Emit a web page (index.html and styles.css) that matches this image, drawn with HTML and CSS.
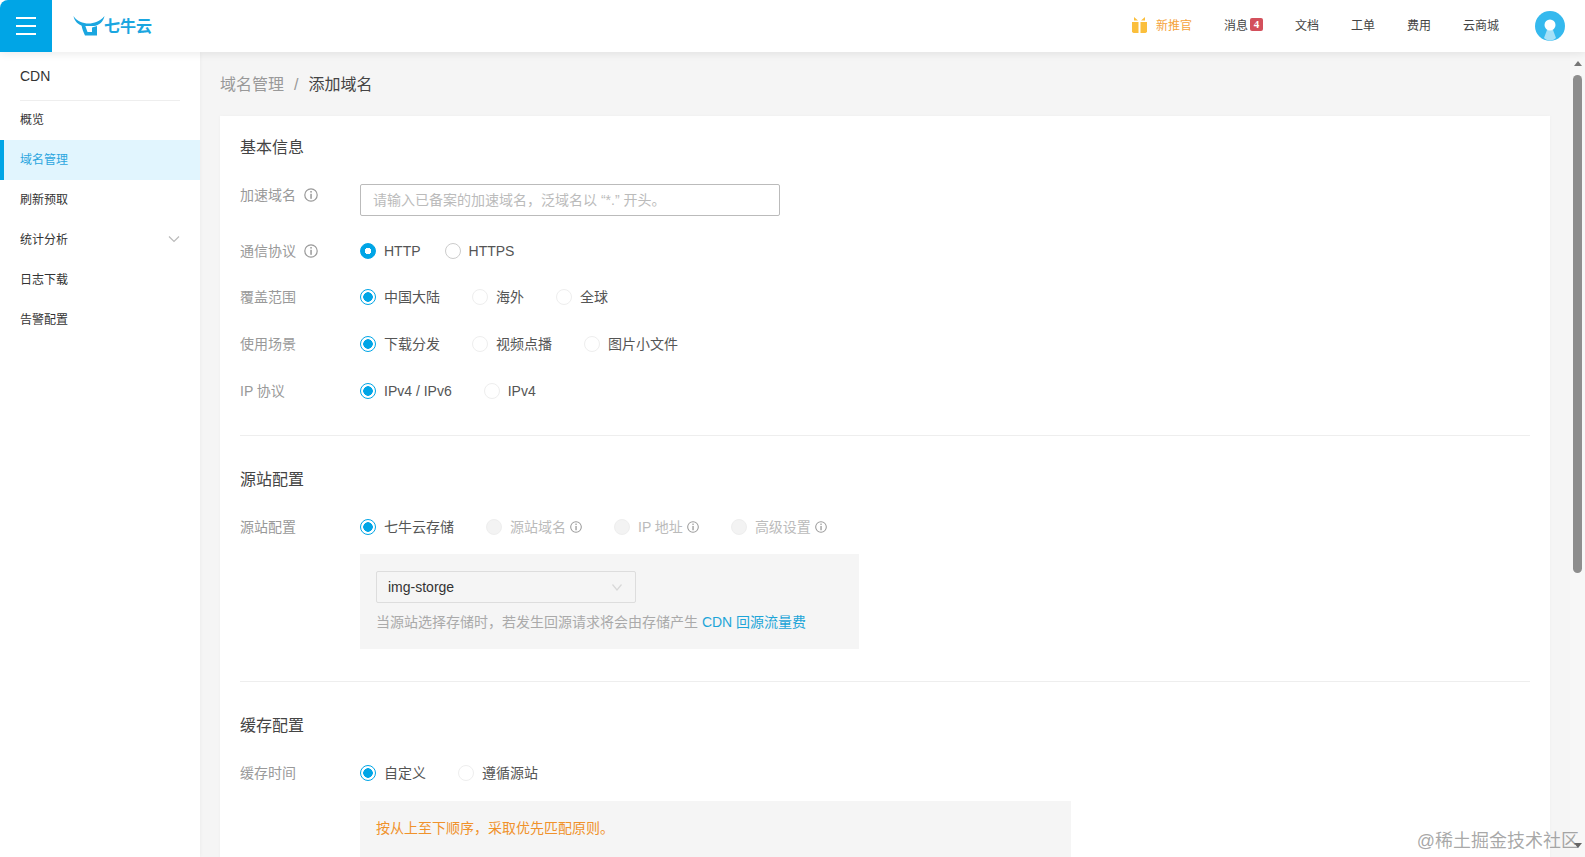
FILE: index.html
```html
<!DOCTYPE html>
<html lang="zh-CN">
<head>
    <meta charset="UTF-8">
    <title>添加域名</title>
    <link rel="stylesheet" href="styles.css">
</head>
<body>

    <header class="topbar">
        <button class="burger"><span></span><span></span><span></span></button>
        <div class="logo">
            <svg width="32" height="22" viewBox="0 0 32 22">
                <path fill="#1aa6e0" d="M0.500 0C4 5.500 10 7.500 15.500 7.500C21 7.500 27 5.500 31.500 0C30.500 5.500 26 9.500 21 10L10 10C5.500 9 1.500 5.500 0.500 0Z"/>
                <path fill="#1aa6e0" d="M8.500 9L12 9L14.500 16L19 16L19 11.500L24 10L24 19.500L12 19.500C10.500 16 9 13 8.500 9Z"/>
                <path fill="#fff" d="M14 11.500L19 11.500L19 13.500L14.800 13.500Z"/>
            </svg>
            <span class="logo-text">七牛云</span>
        </div>
        <nav class="topnav">
            <a class="promo">
                <svg width="15" height="16" viewBox="0 0 15 16">
                    <path fill="#fbbf3c" d="M0 5H6.500V16H1.500L0 15ZM8.500 5H15V15L13.500 16H8.500Z"/>
                    <path fill="#fbbf3c" d="M2 0L6 3.500H2ZM13 0L9 3.500H13Z"/>
                </svg>
                <span>新推官</span>
            </a>
            <a class="msg">消息<span class="badge">4</span></a>
            <a>文档</a>
            <a>工单</a>
            <a>费用</a>
            <a>云商城</a>
            <svg class="avatar" width="30" height="30" viewBox="0 0 30 30">
                <circle cx="15" cy="15" r="15" fill="#35b9ee"/>
                <path fill="#a6e1f8" d="M9 27L12 19H18L21 27C17 30.500 13 30.500 9 27Z"/>
                <circle cx="15" cy="14" r="5.500" fill="#fff"/>
            </svg>
        </nav>
    </header>

    <div class="layout">
        <aside class="sidebar">
            <div class="side-title">CDN</div>
            <ul class="side-menu">
                <li>概览</li>
                <li class="active">域名管理</li>
                <li>刷新预取</li>
                <li>统计分析
                    <svg class="chevron" width="12" height="8" viewBox="0 0 12 8"><path d="M1 1.500L6 6.500L11 1.500" fill="none" stroke="#bbb" stroke-width="1.200"/></svg>
                </li>
                <li>日志下载</li>
                <li>告警配置</li>
            </ul>
        </aside>

        <main class="content">
            <div class="breadcrumb">
                <span class="crumb-link">域名管理</span>
                <span class="crumb-sep">/</span>
                <span class="crumb-now">添加域名</span>
            </div>

            <section class="card">
                <h2>基本信息</h2>
                <div class="row first-row">
                    <label>加速域名
                        <svg class="info" width="14" height="14" viewBox="0 0 14 14"><use href="#info"/></svg>
                    </label>
                    <input class="text-input" placeholder="请输入已备案的加速域名，泛域名以 “*.” 开头。">
                </div>
                <div class="row">
                    <label>通信协议
                        <svg class="info" width="14" height="14" viewBox="0 0 14 14"><use href="#info"/></svg>
                    </label>
                    <div class="radios tight">
                        <span class="radio"><i class="dot focus"></i>HTTP</span>
                        <span class="radio"><i class="dot plain"></i>HTTPS</span>
                    </div>
                </div>
                <div class="row">
                    <label>覆盖范围</label>
                    <div class="radios cn">
                        <span class="radio"><i class="dot on"></i>中国大陆</span>
                        <span class="radio"><i class="dot"></i>海外</span>
                        <span class="radio"><i class="dot"></i>全球</span>
                    </div>
                </div>
                <div class="row">
                    <label>使用场景</label>
                    <div class="radios cn">
                        <span class="radio"><i class="dot on"></i>下载分发</span>
                        <span class="radio"><i class="dot"></i>视频点播</span>
                        <span class="radio"><i class="dot"></i>图片小文件</span>
                    </div>
                </div>
                <div class="row">
                    <label>IP 协议</label>
                    <div class="radios">
                        <span class="radio"><i class="dot on"></i>IPv4 / IPv6</span>
                        <span class="radio"><i class="dot"></i>IPv4</span>
                    </div>
                </div>

                <hr>

                <h2>源站配置</h2>
                <div class="row first-row-text">
                    <label>源站配置</label>
                    <div class="radios cn">
                        <span class="radio"><i class="dot on"></i>七牛云存储</span>
                        <span class="radio off"><i class="dot disabled"></i>源站域名<svg class="info-sm" width="12" height="12" viewBox="0 0 14 14"><use href="#info"/></svg></span>
                        <span class="radio off"><i class="dot disabled"></i>IP 地址<svg class="info-sm" width="12" height="12" viewBox="0 0 14 14"><use href="#info"/></svg></span>
                        <span class="radio off"><i class="dot disabled"></i>高级设置<svg class="info-sm" width="12" height="12" viewBox="0 0 14 14"><use href="#info"/></svg></span>
                    </div>
                </div>
                <div class="sub-box bucket-box">
                    <div class="select">
                        <span>img-storge</span>
                        <svg width="10" height="7" viewBox="0 0 10 7"><path d="M0.500 0.500L5 6L9.500 0.500" fill="none" stroke="#d8d8d8" stroke-width="1.200"/></svg>
                    </div>
                    <p class="hint">当源站选择存储时，若发生回源请求将会由存储产生 <a>CDN 回源流量费</a></p>
                </div>

                <hr>

                <h2>缓存配置</h2>
                <div class="row first-row-text">
                    <label>缓存时间</label>
                    <div class="radios cn">
                        <span class="radio"><i class="dot on"></i>自定义</span>
                        <span class="radio"><i class="dot"></i>遵循源站</span>
                    </div>
                </div>
                <div class="sub-box cache-box">
                    <p class="warn">按从上至下顺序，采取优先匹配原则。</p>
                </div>
            </section>
        </main>

        <div class="scrollbar">
            <i class="arrow-up"></i>
            <div class="thumb"></div>
        </div>
    </div>

    <div class="watermark">@稀土掘金技术社区</div>
    <i class="arrow-down"></i>

    <svg class="defs" width="0" height="0">
        <symbol id="info" viewBox="0 0 14 14">
            <circle cx="7" cy="7" r="6.200" fill="none" stroke="#999" stroke-width="1.200"/>
            <rect x="6.300" y="3" width="1.500" height="1.600" fill="#999"/>
            <rect x="6.300" y="5.800" width="1.500" height="5" fill="#999"/>
        </symbol>
    </svg>

</body>
</html>
```

FILE: styles.css
```css
* {
    box-sizing: border-box;
}
html, body {
    height: 100%;
}
body {
    margin: 0;
    overflow: hidden;
    background-color: #f5f5f5;
    color: #333;
    font-family: "Liberation Sans", "Noto Sans CJK SC", sans-serif;
    font-size: 14px;
    position: relative;
}

/* top bar */
.topbar {
    display: flex;
    align-items: center;
    height: 52px;
    background-color: white;
    box-shadow: 0 2px 8px rgba(0, 0, 0, 0.08);
    position: relative;
    z-index: 2;
}
.burger {
    display: flex;
    flex-direction: column;
    justify-content: center;
    align-items: center;
    gap: 6px;
    width: 52px;
    height: 52px;
    border: none;
    padding: 0;
    border-top-left-radius: 8px;
    background-color: #00a5e6;
}
.burger span {
    display: block;
    width: 20px;
    height: 2px;
    background-color: white;
}
.logo {
    display: flex;
    align-items: center;
    margin-left: 21px;
    padding-top: 2px;
}
.logo-text {
    margin-left: -1px;
    font-size: 16px;
    font-weight: bold;
    line-height: 22px;
    color: #1aa6e0;
}
.topnav {
    display: flex;
    align-items: center;
    gap: 32px;
    margin-left: auto;
    padding-right: 20px;
    font-size: 12px;
    color: #444;
}
.topnav a {
    padding-bottom: 3px;
}
.promo {
    display: flex;
    align-items: center;
    gap: 9px;
    color: #f5a33c;
}
.msg {
    display: flex;
    align-items: center;
    gap: 2px;
}
.badge {
    width: 13px;
    height: 13px;
    border-radius: 2px;
    background-color: #d3505c;
    color: white;
    font-family: "Liberation Serif", serif;
    font-size: 11px;
    font-weight: bold;
    line-height: 13px;
    text-align: center;
}
.avatar {
    margin-left: 4px;
}

/* page layout */
.layout {
    display: flex;
    height: calc(100% - 52px);
}
.sidebar {
    flex: none;
    width: 200px;
    background-color: white;
    box-shadow: 1px 0 3px rgba(0, 0, 0, 0.03);
}
.side-title {
    height: 48px;
    margin: 0 20px;
    box-shadow: 0 1px 0 #eee;
    line-height: 48px;
    font-size: 14px;
}
.side-menu {
    list-style: none;
    margin: 0;
    padding: 0;
    font-size: 12px;
}
.side-menu li {
    display: flex;
    align-items: center;
    justify-content: space-between;
    height: 40px;
    padding: 0 20px 3px 20px;
}
.side-menu .active {
    background-color: #e1f5fe;
    border-left: 4px solid #00a5e6;
    padding-left: 16px;
    color: #2ba6df;
}

/* content */
.content {
    flex: 1;
    min-width: 0;
    padding: 0 20px;
    overflow: hidden;
}
.breadcrumb {
    height: 64px;
    padding-top: 22px;
    font-size: 16px;
    line-height: 22px;
}
.crumb-link {
    color: #999;
}
.crumb-sep {
    margin: 0 5.500px;
    color: #999;
}
.crumb-now {
    color: #444;
}
.card {
    padding: 20px 20px 40px;
    background-color: white;
    box-shadow: 0 0 4px rgba(0, 0, 0, 0.03);
}
.card h2 {
    margin: 0;
    font-size: 16px;
    font-weight: normal;
    line-height: 24px;
    color: #444;
}
.card hr {
    margin: 34px 0 32px;
    border: none;
    border-top: 1px solid #eee;
}
.row {
    display: flex;
    align-items: center;
    height: 20px;
    margin-top: 27px;
}
.row label {
    flex: none;
    display: flex;
    align-items: center;
    gap: 8px;
    width: 120px;
    padding-bottom: 2px;
    color: #999;
}
.info {
    margin-top: 2px;
}
.first-row {
    align-items: flex-start;
    height: 32px;
    margin-top: 24px;
}
.first-row + .row {
    margin-top: 25px;
}
.first-row + .row + .row {
    margin-top: 26px;
}
.first-row-text {
    margin-top: 25px;
}
.first-row label {
    height: 22px;
}
.text-input {
    width: 420px;
    height: 32px;
    padding: 0 12px;
    border: 1px solid #bbb;
    border-radius: 2px;
    font: inherit;
    outline: none;
}
.text-input::placeholder {
    color: #bbb;
}
.radios {
    display: flex;
    align-items: center;
    gap: 32px;
}
.radios.tight {
    gap: 24px;
}
.radio {
    display: flex;
    align-items: center;
    color: #555;
}
.radios.cn .radio {
    padding-bottom: 2px;
}
.radios.cn .dot {
    margin-top: 2px;
}
.radio.off {
    color: #bbb;
}
.dot {
    flex: none;
    width: 16px;
    height: 16px;
    margin-right: 8px;
    border: 1px solid #eee;
    border-radius: 50%;
    background-color: white;
}
.dot.plain {
    border-color: #ccc;
}
.dot.on {
    border-color: #00a5e6;
    background: radial-gradient(circle, #00a5e6 0 4.500px, white 5px);
}
.dot.focus {
    border-color: #00a5e6;
    background: radial-gradient(circle, white 0 3px, #00a5e6 3.500px);
}
.dot.disabled {
    background-color: #f3f3f3;
}
.info-sm {
    margin: 2px 0 0 4px;
}
.defs {
    position: absolute;
}

/* grey boxes under a radio row */
.sub-box {
    margin-left: 120px;
    background-color: #f5f5f5;
}
.bucket-box {
    width: 499px;
    height: 95px;
    margin-top: 17px;
    margin-bottom: -2px;
    padding: 17px 16px 0;
}
.select {
    display: flex;
    align-items: center;
    justify-content: space-between;
    width: 260px;
    height: 32px;
    padding: 0 13px 0 11px;
    border: 1px solid #ddd;
    border-radius: 2px;
    color: #333;
}
.hint {
    margin: 9px 0 0;
    line-height: 20px;
    color: #aaa;
}
.hint a {
    color: #1ea5d8;
}
.cache-box {
    width: 711px;
    height: 100px;
    margin-top: 18px;
    padding: 17px 16px;
}
.warn {
    margin: 0;
    line-height: 20px;
    color: #f0922b;
}

/* scrollbar and overlays */
.scrollbar {
    flex: none;
    width: 15px;
    padding: 9px 3px 0;
    background-color: #f7f7f7;
}
.arrow-up {
    display: block;
    width: 0;
    margin: 0 auto;
    border: 4.500px solid transparent;
    border-top: none;
    border-bottom: 5px solid #777;
}
.thumb {
    height: 498px;
    margin-top: 9px;
    border-radius: 5px;
    background-color: #8e8e8e;
}
.arrow-down {
    position: absolute;
    right: 3px;
    bottom: 9px;
    border: 4.500px solid transparent;
    border-bottom: none;
    border-top: 5px solid #666;
}
.watermark {
    position: absolute;
    right: 6px;
    bottom: 4px;
    font-size: 18px;
    line-height: 24px;
    color: rgba(110, 110, 110, 0.6);
}
```
